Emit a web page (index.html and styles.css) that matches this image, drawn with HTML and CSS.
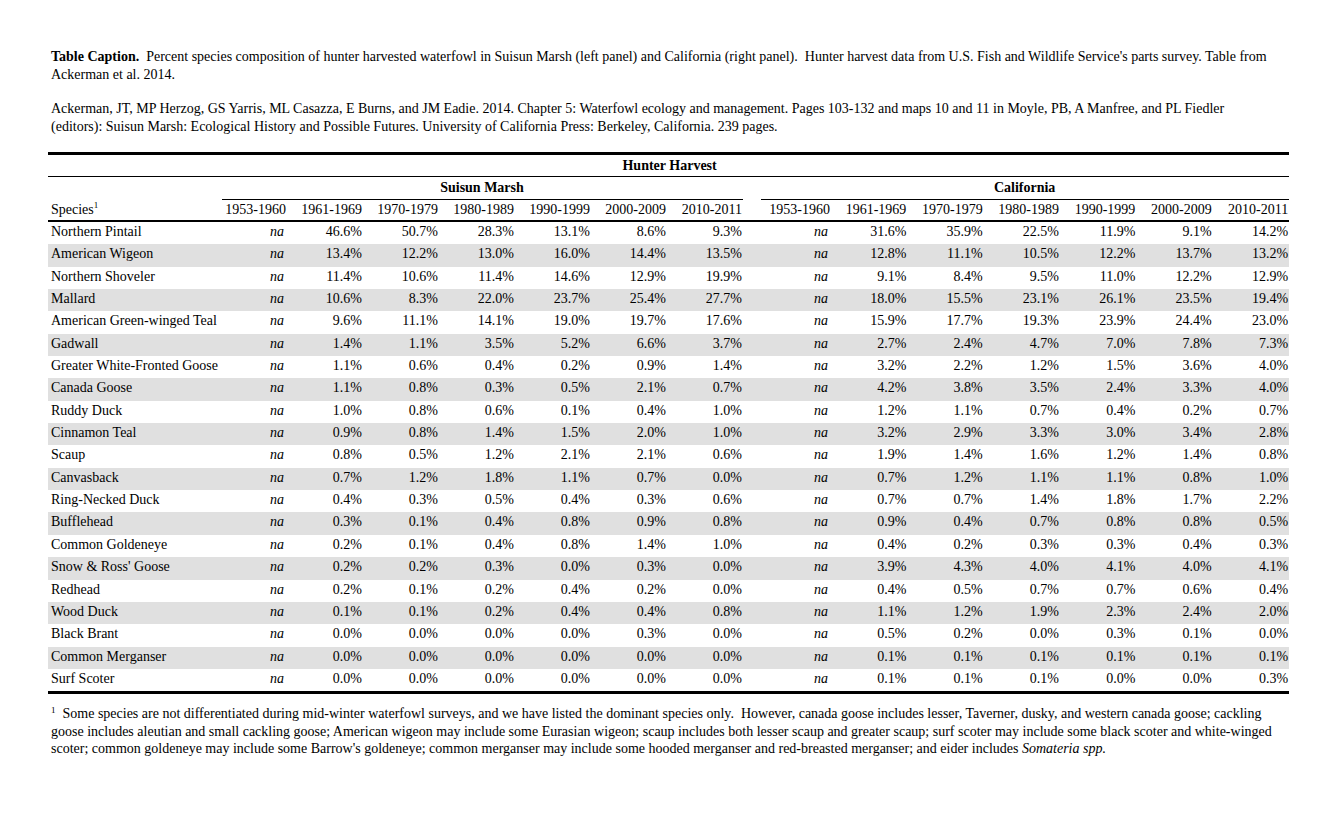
FILE: index.html
```html
<!DOCTYPE html>
<html lang="en">
<head>
  <meta charset="UTF-8" />
  <meta name="viewport" content="width=device-width, initial-scale=1.0"/>
  <title>Hunter Harvest Table</title>
  <link rel="stylesheet" href="styles.css">
</head>
<body>
  <div class="page">
    <p class="note"><b>Table Caption.</b>&nbsp; Percent species composition of hunter harvested waterfowl in Suisun Marsh (left panel) and California (right panel).&nbsp; Hunter harvest data from U.S. Fish and Wildlife Service's parts survey. Table from Ackerman et al. 2014.</p>
    <p class="note">Ackerman, JT, MP Herzog, GS Yarris, ML Casazza, E Burns, and JM Eadie. 2014. Chapter 5: Waterfowl ecology and management. Pages 103-132 and maps 10 and 11 in Moyle, PB, A Manfree, and PL Fiedler (editors): Suisun Marsh: Ecological History and Possible Futures. University of California Press: Berkeley, California. 239 pages.</p>

    <table class="harvest">
      <colgroup>
        <col class="c-species">
        <col class="c-first"><col class="c-num"><col class="c-num"><col class="c-num"><col class="c-num"><col class="c-num"><col class="c-num">
        <col class="c-gap">
        <col class="c-first2"><col class="c-num2"><col class="c-num2"><col class="c-num2"><col class="c-num2"><col class="c-num2"><col class="c-num2">
      </colgroup>
      <thead>
        <tr class="r-title"><th colspan="16">Hunter Harvest</th></tr>
        <tr class="r-group">
          <th></th>
          <th colspan="7" class="group">Suisun Marsh</th>
          <th></th>
          <th colspan="7" class="group">California</th>
        </tr>
        <tr class="r-years">
          <th class="species">Species<sup>1</sup></th>
          <th>1953-1960</th><th>1961-1969</th><th>1970-1979</th><th>1980-1989</th><th>1990-1999</th><th>2000-2009</th><th>2010-2011</th>
          <th></th>
          <th>1953-1960</th><th>1961-1969</th><th>1970-1979</th><th>1980-1989</th><th>1990-1999</th><th>2000-2009</th><th>2010-2011</th>
        </tr>
      </thead>
      <tbody>
        <tr><td>Northern Pintail</td><td class="na">na</td><td>46.6%</td><td>50.7%</td><td>28.3%</td><td>13.1%</td><td>8.6%</td><td>9.3%</td><td></td><td class="na">na</td><td>31.6%</td><td>35.9%</td><td>22.5%</td><td>11.9%</td><td>9.1%</td><td>14.2%</td></tr>
        <tr><td>American Wigeon</td><td class="na">na</td><td>13.4%</td><td>12.2%</td><td>13.0%</td><td>16.0%</td><td>14.4%</td><td>13.5%</td><td></td><td class="na">na</td><td>12.8%</td><td>11.1%</td><td>10.5%</td><td>12.2%</td><td>13.7%</td><td>13.2%</td></tr>
        <tr><td>Northern Shoveler</td><td class="na">na</td><td>11.4%</td><td>10.6%</td><td>11.4%</td><td>14.6%</td><td>12.9%</td><td>19.9%</td><td></td><td class="na">na</td><td>9.1%</td><td>8.4%</td><td>9.5%</td><td>11.0%</td><td>12.2%</td><td>12.9%</td></tr>
        <tr><td>Mallard</td><td class="na">na</td><td>10.6%</td><td>8.3%</td><td>22.0%</td><td>23.7%</td><td>25.4%</td><td>27.7%</td><td></td><td class="na">na</td><td>18.0%</td><td>15.5%</td><td>23.1%</td><td>26.1%</td><td>23.5%</td><td>19.4%</td></tr>
        <tr><td>American Green-winged Teal</td><td class="na">na</td><td>9.6%</td><td>11.1%</td><td>14.1%</td><td>19.0%</td><td>19.7%</td><td>17.6%</td><td></td><td class="na">na</td><td>15.9%</td><td>17.7%</td><td>19.3%</td><td>23.9%</td><td>24.4%</td><td>23.0%</td></tr>
        <tr><td>Gadwall</td><td class="na">na</td><td>1.4%</td><td>1.1%</td><td>3.5%</td><td>5.2%</td><td>6.6%</td><td>3.7%</td><td></td><td class="na">na</td><td>2.7%</td><td>2.4%</td><td>4.7%</td><td>7.0%</td><td>7.8%</td><td>7.3%</td></tr>
        <tr><td>Greater White-Fronted Goose</td><td class="na">na</td><td>1.1%</td><td>0.6%</td><td>0.4%</td><td>0.2%</td><td>0.9%</td><td>1.4%</td><td></td><td class="na">na</td><td>3.2%</td><td>2.2%</td><td>1.2%</td><td>1.5%</td><td>3.6%</td><td>4.0%</td></tr>
        <tr><td>Canada Goose</td><td class="na">na</td><td>1.1%</td><td>0.8%</td><td>0.3%</td><td>0.5%</td><td>2.1%</td><td>0.7%</td><td></td><td class="na">na</td><td>4.2%</td><td>3.8%</td><td>3.5%</td><td>2.4%</td><td>3.3%</td><td>4.0%</td></tr>
        <tr><td>Ruddy Duck</td><td class="na">na</td><td>1.0%</td><td>0.8%</td><td>0.6%</td><td>0.1%</td><td>0.4%</td><td>1.0%</td><td></td><td class="na">na</td><td>1.2%</td><td>1.1%</td><td>0.7%</td><td>0.4%</td><td>0.2%</td><td>0.7%</td></tr>
        <tr><td>Cinnamon Teal</td><td class="na">na</td><td>0.9%</td><td>0.8%</td><td>1.4%</td><td>1.5%</td><td>2.0%</td><td>1.0%</td><td></td><td class="na">na</td><td>3.2%</td><td>2.9%</td><td>3.3%</td><td>3.0%</td><td>3.4%</td><td>2.8%</td></tr>
        <tr><td>Scaup</td><td class="na">na</td><td>0.8%</td><td>0.5%</td><td>1.2%</td><td>2.1%</td><td>2.1%</td><td>0.6%</td><td></td><td class="na">na</td><td>1.9%</td><td>1.4%</td><td>1.6%</td><td>1.2%</td><td>1.4%</td><td>0.8%</td></tr>
        <tr><td>Canvasback</td><td class="na">na</td><td>0.7%</td><td>1.2%</td><td>1.8%</td><td>1.1%</td><td>0.7%</td><td>0.0%</td><td></td><td class="na">na</td><td>0.7%</td><td>1.2%</td><td>1.1%</td><td>1.1%</td><td>0.8%</td><td>1.0%</td></tr>
        <tr><td>Ring-Necked Duck</td><td class="na">na</td><td>0.4%</td><td>0.3%</td><td>0.5%</td><td>0.4%</td><td>0.3%</td><td>0.6%</td><td></td><td class="na">na</td><td>0.7%</td><td>0.7%</td><td>1.4%</td><td>1.8%</td><td>1.7%</td><td>2.2%</td></tr>
        <tr><td>Bufflehead</td><td class="na">na</td><td>0.3%</td><td>0.1%</td><td>0.4%</td><td>0.8%</td><td>0.9%</td><td>0.8%</td><td></td><td class="na">na</td><td>0.9%</td><td>0.4%</td><td>0.7%</td><td>0.8%</td><td>0.8%</td><td>0.5%</td></tr>
        <tr><td>Common Goldeneye</td><td class="na">na</td><td>0.2%</td><td>0.1%</td><td>0.4%</td><td>0.8%</td><td>1.4%</td><td>1.0%</td><td></td><td class="na">na</td><td>0.4%</td><td>0.2%</td><td>0.3%</td><td>0.3%</td><td>0.4%</td><td>0.3%</td></tr>
        <tr><td>Snow &amp; Ross' Goose</td><td class="na">na</td><td>0.2%</td><td>0.2%</td><td>0.3%</td><td>0.0%</td><td>0.3%</td><td>0.0%</td><td></td><td class="na">na</td><td>3.9%</td><td>4.3%</td><td>4.0%</td><td>4.1%</td><td>4.0%</td><td>4.1%</td></tr>
        <tr><td>Redhead</td><td class="na">na</td><td>0.2%</td><td>0.1%</td><td>0.2%</td><td>0.4%</td><td>0.2%</td><td>0.0%</td><td></td><td class="na">na</td><td>0.4%</td><td>0.5%</td><td>0.7%</td><td>0.7%</td><td>0.6%</td><td>0.4%</td></tr>
        <tr><td>Wood Duck</td><td class="na">na</td><td>0.1%</td><td>0.1%</td><td>0.2%</td><td>0.4%</td><td>0.4%</td><td>0.8%</td><td></td><td class="na">na</td><td>1.1%</td><td>1.2%</td><td>1.9%</td><td>2.3%</td><td>2.4%</td><td>2.0%</td></tr>
        <tr><td>Black Brant</td><td class="na">na</td><td>0.0%</td><td>0.0%</td><td>0.0%</td><td>0.0%</td><td>0.3%</td><td>0.0%</td><td></td><td class="na">na</td><td>0.5%</td><td>0.2%</td><td>0.0%</td><td>0.3%</td><td>0.1%</td><td>0.0%</td></tr>
        <tr><td>Common Merganser</td><td class="na">na</td><td>0.0%</td><td>0.0%</td><td>0.0%</td><td>0.0%</td><td>0.0%</td><td>0.0%</td><td></td><td class="na">na</td><td>0.1%</td><td>0.1%</td><td>0.1%</td><td>0.1%</td><td>0.1%</td><td>0.1%</td></tr>
        <tr><td>Surf Scoter</td><td class="na">na</td><td>0.0%</td><td>0.0%</td><td>0.0%</td><td>0.0%</td><td>0.0%</td><td>0.0%</td><td></td><td class="na">na</td><td>0.1%</td><td>0.1%</td><td>0.1%</td><td>0.0%</td><td>0.0%</td><td>0.3%</td></tr>
      </tbody>
    </table>

    <p class="footnote"><sup>1</sup>&nbsp; Some species are not differentiated during mid-winter waterfowl surveys, and we have listed the dominant species only.&nbsp; However, canada goose includes lesser, Taverner, dusky, and western canada goose; cackling goose includes aleutian and small cackling goose; American wigeon may include some Eurasian wigeon; scaup includes both lesser scaup and greater scaup; surf scoter may include some black scoter and white-winged scoter; common goldeneye may include some Barrow's goldeneye; common merganser may include some hooded merganser and red-breasted merganser; and eider includes <i>Somateria spp.</i></p>
  </div>
</body>
</html>
```

FILE: styles.css
```css
body {
  margin: 0;
  background: #fff;
  color: #000;
  font-family: "Liberation Serif", "Times New Roman", Times, serif;
  font-size: 14px;
}
.page {
  padding: 48px 47px 0 48px;
}
.note {
  width: 1222px;
  margin: 0 0 17px;
  padding-left: 3px;
  line-height: 17.5px;
}

/* table */
.harvest {
  width: 1241px;
  table-layout: fixed;
  border-collapse: collapse;
  border-top: 3px solid #000;
  border-bottom: 3px solid #000;
}
.c-species { width: 174px; }
.c-first { width: 65px; }
.c-num { width: 76px; }
.c-gap { width: 18px; }
.c-first2 { width: 70px; }
.c-num2 { width: 76.33px; }

.harvest th,
.harvest td {
  padding: 0 1px 0 0;
  text-align: right;
  white-space: nowrap;
  font-weight: normal;
}
.harvest th:first-child,
.harvest td:first-child {
  text-align: left;
  padding-left: 3px;
}
.r-title th {
  height: 21px;
  text-align: center !important;
  font-weight: bold;
  border-bottom: 1px solid #000;
}
.r-group th {
  height: 22px;
}
.r-group th.group {
  text-align: center;
  font-weight: bold;
  border-bottom: 1px solid #000;
}
.r-years th {
  height: 20px;
  border-bottom: 2px solid #000;
}
.species sup {
  font-size: 9px;
  vertical-align: 6px;
  line-height: 0;
}
.harvest tbody td {
  height: 21.35px;
  line-height: 18px;
  vertical-align: top;
  padding-top: 1px;
}
.harvest tbody tr:nth-child(even) {
  background: #e0e0e0;
}
.harvest td.na {
  font-style: italic;
  padding-right: 3px;
}

.footnote {
  margin: 11px 0 0;
  padding-left: 3px;
  line-height: 17.5px;
}
.footnote sup {
  font-size: 9px;
  vertical-align: 5px;
  line-height: 0;
}
```
